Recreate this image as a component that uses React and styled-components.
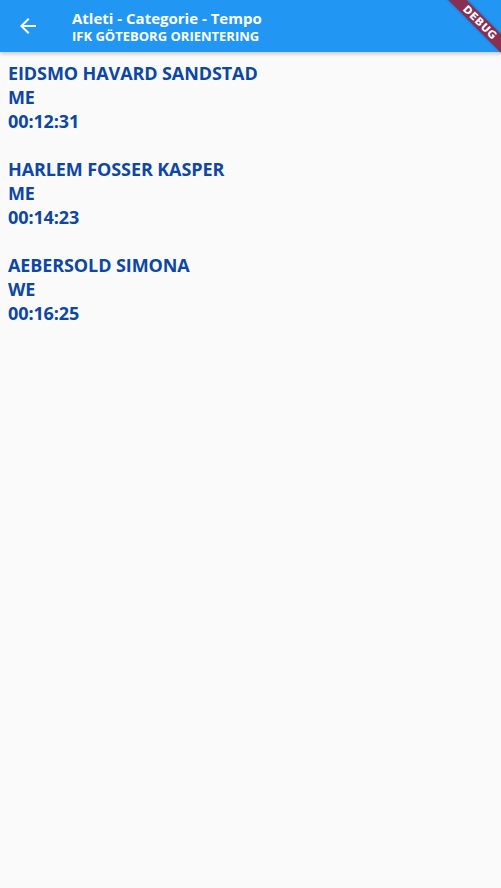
import React from "react";
import styled, { createGlobalStyle } from "styled-components";

const Global = createGlobalStyle`
  html, body { margin: 0; padding: 0; background: #fafafa; overflow: hidden; }
  body { font-family: "Open Sans", "Noto Sans", sans-serif; }
`;

const Page = styled.div`
  position: relative;
  width: 501px;
  height: 888px;
  overflow: hidden;
  background: #fafafa;
`;

const AppBar = styled.header`
  display: flex;
  align-items: center;
  height: 52px;
  padding-left: 16px;
  background: #2196f3;
  color: #ffffff;
  box-shadow: 0 2px 4px rgba(0, 0, 0, 0.2);
  position: relative;
  z-index: 1;
`;

const BackButton = styled.button`
  display: flex;
  align-items: center;
  justify-content: center;
  width: 24px;
  height: 24px;
  padding: 0;
  border: none;
  background: none;
  color: #ffffff;
  margin-right: 32px;
`;

const Titles = styled.div`
  display: flex;
  flex-direction: column;
  padding-top: 1px;
`;

const Title = styled.div`
  font-size: 15px;
  font-weight: 700;
  line-height: 19px;
`;

const Subtitle = styled.div`
  font-size: 13px;
  font-weight: 700;
  line-height: 17px;
`;

const List = styled.main`
  display: flex;
  flex-direction: column;
  gap: 24px;
  padding: 9px 8px;
`;

const Entry = styled.div`
  display: flex;
  flex-direction: column;
`;

const Line = styled.div`
  font-size: 18px;
  font-weight: 700;
  line-height: 24px;
  color: #0d47a1;
  letter-spacing: -0.1px;
`;

const Banner = styled.div`
  position: absolute;
  left: 419.5px;
  top: 15.5px;
  width: 120px;
  height: 13px;
  transform: rotate(45deg);
  background: #892f54;
  box-shadow: 0 0 3px rgba(0, 0, 0, 0.25);
  color: #ffffff;
  font-family: "DejaVu Sans", sans-serif;
  font-size: 10.5px;
  font-weight: 900;
  line-height: 13px;
  text-align: center;
  letter-spacing: 0.4px;
  z-index: 2;
`;

const athletes = [
  { name: "EIDSMO HAVARD SANDSTAD", cat: "ME", time: "00:12:31" },
  { name: "HARLEM FOSSER KASPER", cat: "ME", time: "00:14:23" },
  { name: "AEBERSOLD SIMONA", cat: "WE", time: "00:16:25" },
];

export default function App() {
  return (
    <Page>
      <Global />
      <AppBar>
        <BackButton aria-label="Indietro">
          <svg width="24" height="24" viewBox="0 0 24 24" fill="currentColor">
            <path d="M20 11H7.83l5.59-5.59L12 4l-8 8 8 8 1.41-1.41L7.83 13H20v-2z" />
          </svg>
        </BackButton>
        <Titles>
          <Title>Atleti - Categorie - Tempo</Title>
          <Subtitle>IFK GÖTEBORG ORIENTERING</Subtitle>
        </Titles>
      </AppBar>
      <List>
        {athletes.map((a) => (
          <Entry key={a.name}>
            <Line>{a.name}</Line>
            <Line>{a.cat}</Line>
            <Line>{a.time}</Line>
          </Entry>
        ))}
      </List>
      <Banner>DEBUG</Banner>
    </Page>
  );
}
